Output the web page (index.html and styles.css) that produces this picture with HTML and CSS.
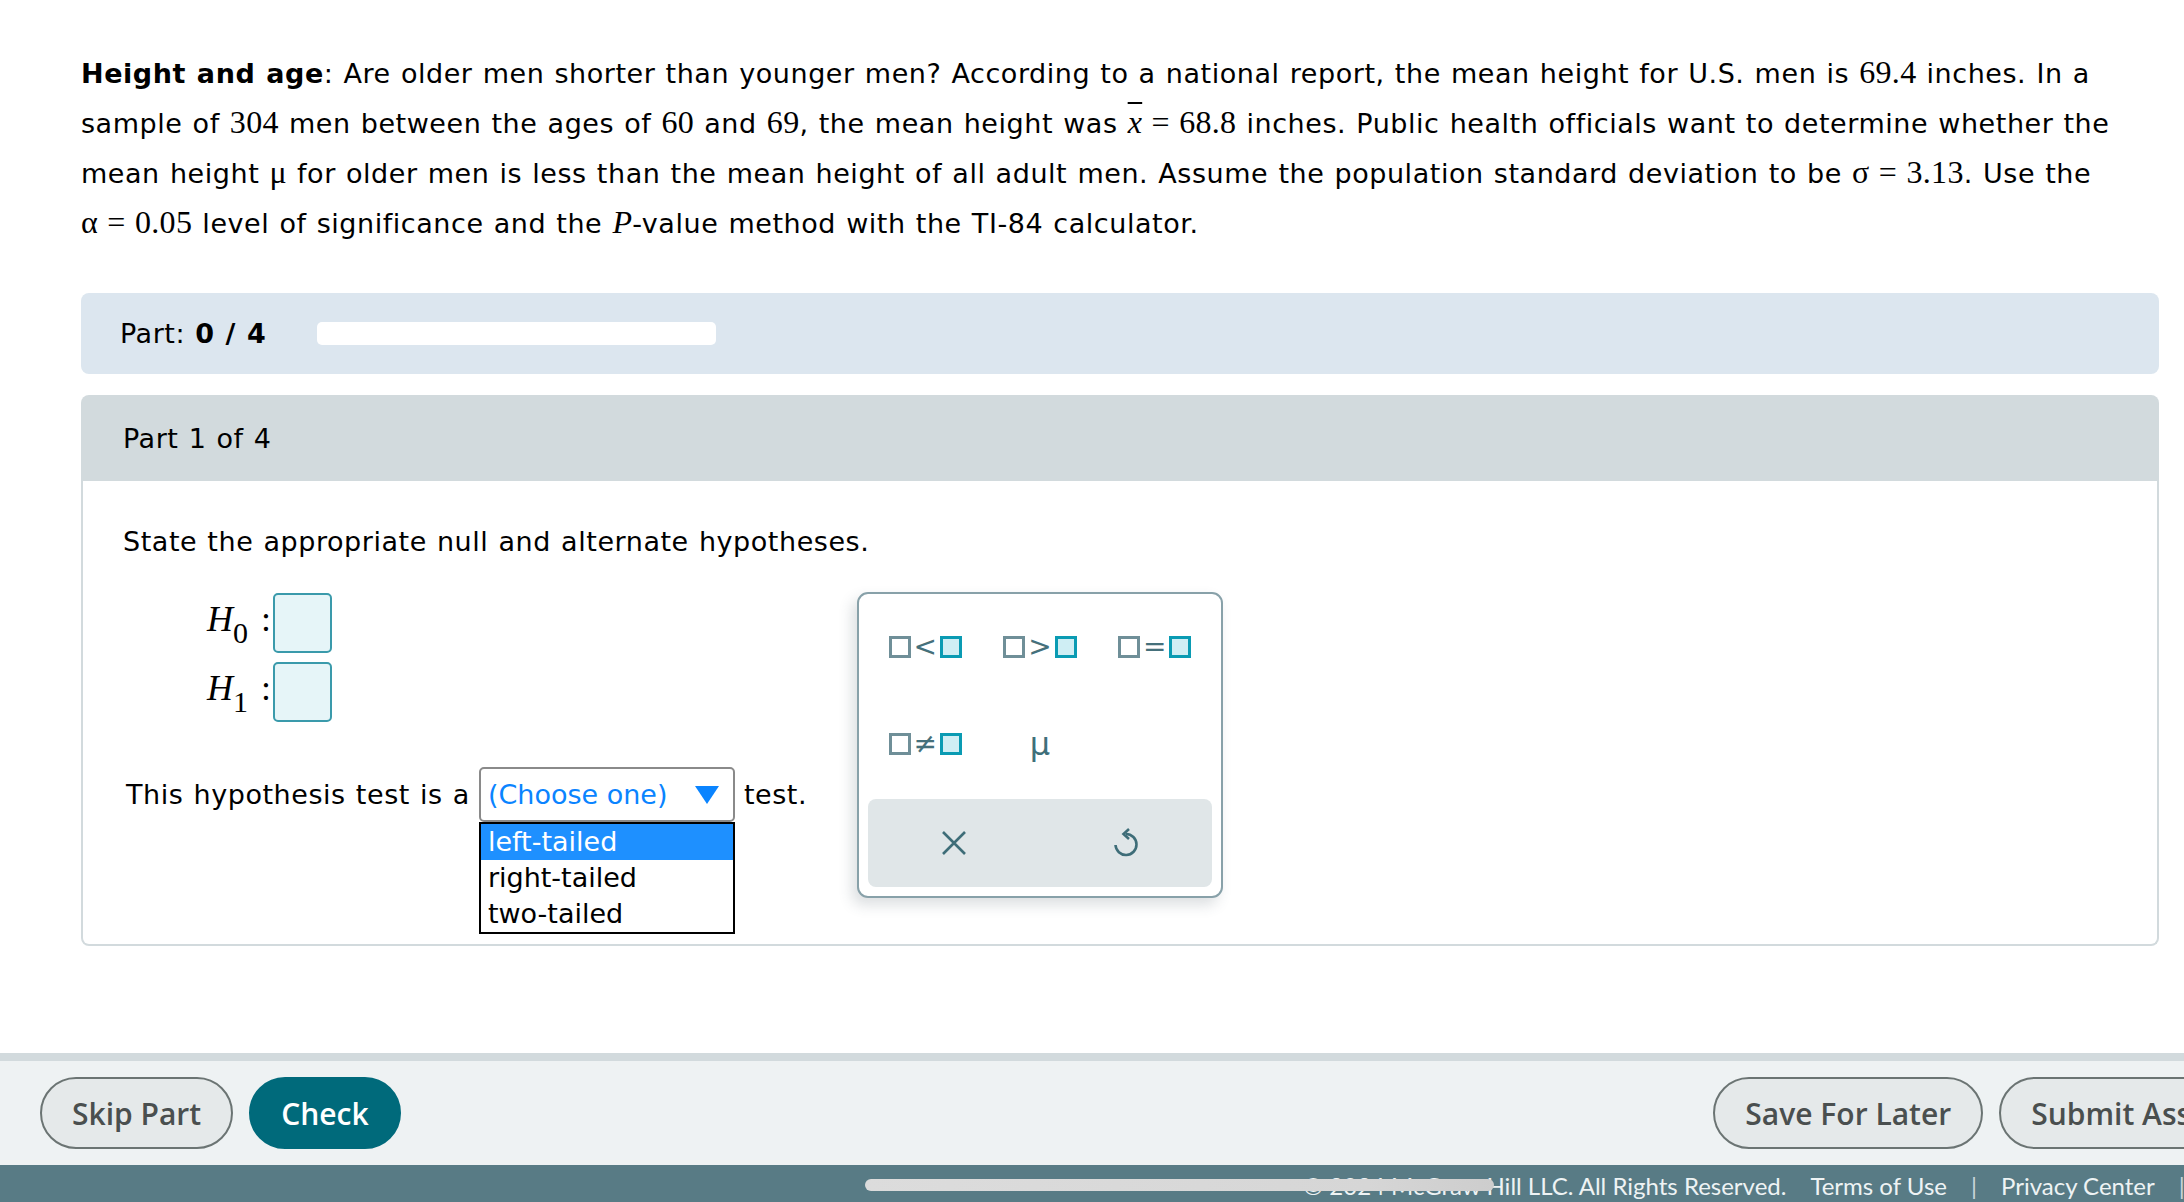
FILE: index.html
```html
<!DOCTYPE html>
<html>
<head>
    <meta charset="utf-8">
    <title>Height and age</title>
    <link rel="stylesheet" href="styles.css">
</head>
<body>

    <div class="main">
        <!-- Question text -->
        <p class="prompt"><b>Height and age</b>: Are older men shorter than younger men? According to a national report, the mean height for U.S. men is <span class="m">69.4</span> inches. In a sample of <span class="m">304</span> men between the ages of <span class="m">60</span> and <span class="m">69</span>, the mean height was <span class="m"><i class="bar">x</i> = 68.8</span> inches. Public health officials want to determine whether the mean height <span class="m">μ</span> for older men is less than the mean height of all adult men. Assume the population standard deviation to be <span class="m">σ = 3.13</span>. Use the <span class="m">α = 0.05</span> level of significance and the <span class="m"><i>P</i></span>-value method with the TI-84 calculator.</p>

        <!-- Progress -->
        <div class="progress">
            <span>Part: <b>0 / 4</b></span>
            <div class="progress-track"></div>
        </div>

        <!-- Part 1 -->
        <div class="part">
            <div class="part-head">Part 1 of 4</div>
            <div class="part-body">
                <p class="lead">State the appropriate null and alternate hypotheses.</p>

                <div class="hyps">
                    <div class="hyp">
                        <span class="hlabel"><i>H</i><sub>0</sub></span>
                        <span class="colon">:</span>
                        <span class="slot"></span>
                    </div>
                    <div class="hyp">
                        <span class="hlabel"><i>H</i><sub>1</sub></span>
                        <span class="colon">:</span>
                        <span class="slot"></span>
                    </div>
                </div>

                <div class="tail-row">
                    <span>This hypothesis test is a</span>
                    <div class="select-wrap">
                        <div class="select">
                            <span>(Choose one)</span>
                            <svg width="24" height="18" viewBox="0 0 24 18"><polygon points="0,0 24,0 12,18" fill="#0a84ff"/></svg>
                        </div>
                        <ul class="options">
                            <li class="active">left-tailed</li>
                            <li>right-tailed</li>
                            <li>two-tailed</li>
                        </ul>
                    </div>
                    <span>test.</span>
                </div>

                <!-- answer palette -->
                <div class="palette">
                    <div class="keys">
                        <button class="key"><span class="sq"></span><span class="op">&lt;</span><span class="sq fill"></span></button>
                        <button class="key"><span class="sq"></span><span class="op">&gt;</span><span class="sq fill"></span></button>
                        <button class="key"><span class="sq"></span><span class="op">=</span><span class="sq fill"></span></button>
                        <button class="key"><span class="sq"></span><span class="op">≠</span><span class="sq fill"></span></button>
                        <button class="key mu">μ</button>
                    </div>
                    <div class="tools">
                        <button class="tool">
                            <svg width="26" height="26" viewBox="0 0 26 26"><path d="M2 2 L24 24 M24 2 L2 24" stroke="#3e6d78" stroke-width="2.6" fill="none"/></svg>
                        </button>
                        <button class="tool">
                            <svg width="28" height="32" viewBox="0 0 28 32"><path d="M14 7 A10.5 10.5 0 1 1 3.5 18" stroke="#3e6d78" stroke-width="2.6" fill="none"/><path d="M17 2 L11.5 7 L17 12" stroke="#3e6d78" stroke-width="2.6" fill="none"/></svg>
                        </button>
                    </div>
                </div>
            </div>
        </div>
    </div>

    <div class="bottom">
        <div class="actions">
            <div class="group">
                <button class="btn">Skip Part</button>
                <button class="btn primary">Check</button>
            </div>
            <div class="group">
                <button class="btn">Save For Later</button>
                <button class="btn">Submit Assignment</button>
            </div>
        </div>
        <div class="legal">
            <span>© 2024 McGraw Hill LLC. All Rights Reserved.</span>
            <span>Terms of Use</span>
            <span class="sep">|</span>
            <span>Privacy Center</span>
            <span class="sep">|</span>
            <span>Accessibility</span>
        </div>
    </div>

    <div class="hscroll"></div>

</body>
</html>
```

FILE: styles.css
```css
/* Basic Reset */
* {
    box-sizing: border-box;
}

html,
body {
    margin: 0;
    overflow: hidden;
}

body {
    position: relative;
    width: 2184px;
    height: 1202px;
    font-family: "DejaVu Sans", Verdana, sans-serif;
    font-size: 27px;
    color: #000;
    background-color: #fff;
}

.main {
    padding: 48px 25px 0 81px;
    letter-spacing: 0.55px;
    word-spacing: 1px;
}

.prompt {
    margin: 0;
    line-height: 48px;
}

.m {
    font-family: "Liberation Serif", "Times New Roman", serif;
    font-size: 32px;
    letter-spacing: 0.3px;
    white-space: nowrap;
}

.bar {
    text-decoration: overline;
    text-decoration-thickness: 2px;
}

/* progress */
.progress {
    display: flex;
    align-items: center;
    height: 81px;
    margin-top: 45px;
    padding-left: 39px;
    background-color: #dce6ef;
    border-radius: 8px;
}

.progress-track {
    width: 399px;
    height: 23px;
    margin-left: 51px;
    background-color: #fff;
    border-radius: 5px;
}

/* part box */
.part {
    margin-top: 21px;
}

.part-head {
    display: flex;
    align-items: center;
    height: 86px;
    padding-left: 42px;
    background-color: #d2dadd;
    border-radius: 8px 8px 0 0;
}

.part-body {
    position: relative;
    padding: 37px 40px 122px;
    border: 2px solid #d2dadd;
    border-top: 0;
    border-radius: 0 0 8px 8px;
}

.lead {
    margin: 0;
    line-height: 48px;
}

.hyps {
    display: flex;
    flex-direction: column;
    gap: 9px;
    margin-top: 27px;
    padding-left: 84px;
}

.hyp {
    display: flex;
    align-items: center;
    height: 60px;
}

.hlabel,
.colon {
    margin-bottom: 8px;
    font-family: "Liberation Serif", "Times New Roman", serif;
    font-size: 36px;
    line-height: 60px;
    letter-spacing: 0;
}

.hlabel {
    width: 52px;
}

.hlabel sub {
    font-size: 30px;
    line-height: 0;
    vertical-align: -12px;
}

.colon {
    width: 14px;
    padding-left: 2px;
}

.slot {
    width: 59px;
    height: 60px;
    background-color: #e6f5f8;
    border: 2px solid #3a9aab;
    border-radius: 5px;
}

/* tail select */
.tail-row {
    display: flex;
    align-items: center;
    gap: 9px;
    margin-top: 45px;
    padding-left: 3px;
}

.select-wrap {
    position: relative;
    letter-spacing: 0;
    word-spacing: 0;
}

.select {
    display: flex;
    align-items: center;
    justify-content: space-between;
    width: 256px;
    height: 55px;
    padding: 0 14px 0 7px;
    color: #0a84ff;
    border: 2px solid #8a8a8a;
    border-radius: 5px;
}

.options {
    position: absolute;
    top: 100%;
    left: 0;
    width: 256px;
    margin: 0;
    padding: 0;
    list-style: none;
    background-color: #fff;
    border: 2px solid #000;
}

.options li {
    height: 36px;
    padding-left: 7px;
    line-height: 36px;
}

.options li.active {
    color: #fff;
    background-color: #1e90ff;
}

/* palette */
.palette {
    position: absolute;
    top: 111px;
    left: 774px;
    width: 366px;
    height: 306px;
    padding: 4px 9px 9px;
    letter-spacing: 0;
    background-color: #fff;
    border: 2px solid #88a1a9;
    border-radius: 11px;
    box-shadow: -5px 7px 14px rgba(60, 80, 90, 0.18);
}

.keys {
    display: grid;
    grid-template-columns: repeat(3, 1fr);
    grid-auto-rows: 97px;
    margin-bottom: 7px;
}

.key {
    display: flex;
    align-items: center;
    justify-content: center;
    gap: 3px;
    padding: 0;
    font-family: "DejaVu Sans", Verdana, sans-serif;
    font-size: 28px;
    color: #45707b;
    background: none;
    border: 0;
}

.sq {
    width: 22px;
    height: 22px;
    background-color: #fff;
    border: 3px solid #6f8f98;
}

.sq.fill {
    background-color: #cfeef4;
    border-color: #0a9bb3;
}

.key.mu {
    font-size: 32px;
    color: #3e6f7a;
}

.tools {
    display: grid;
    grid-template-columns: 1fr 1fr;
    height: 88px;
    background-color: #e0e6e8;
    border-radius: 8px;
}

.tool {
    display: flex;
    align-items: center;
    justify-content: center;
    padding: 0;
    background: none;
    border: 0;
}

/* bottom bar */
.bottom {
    min-width: 2384px;
    margin-top: 107px;
}

.actions {
    display: flex;
    justify-content: space-between;
    height: 112px;
    padding: 16px 40px;
    background-color: #eef2f3;
    border-top: 8px solid #d2dadd;
}

.group {
    display: flex;
    gap: 16px;
}

.btn {
    height: 72px;
    padding: 0 30px;
    font-family: "Open Sans", sans-serif;
    font-weight: 600;
    font-size: 30px;
    color: #4a4f4f;
    background-color: #e5e9ea;
    border: 2px solid #6b7473;
    border-radius: 36px;
}

.btn.primary {
    color: #fff;
    background-color: #006a7b;
    border-color: #006a7b;
}

.legal {
    display: flex;
    justify-content: flex-end;
    gap: 24px;
    padding: 6px 46px 24px 0;
    font-family: Lato, sans-serif;
    font-size: 24px;
    color: #eef3f4;
    background-color: #587b85;
}

.legal .sep {
    color: #c9d6da;
}

.hscroll {
    position: absolute;
    top: 1179px;
    left: 865px;
    width: 629px;
    height: 12px;
    background: linear-gradient(to right, #dcdcdc, #d6d6d6 80%, #cdcdcd);
    border-radius: 6px;
}
```
